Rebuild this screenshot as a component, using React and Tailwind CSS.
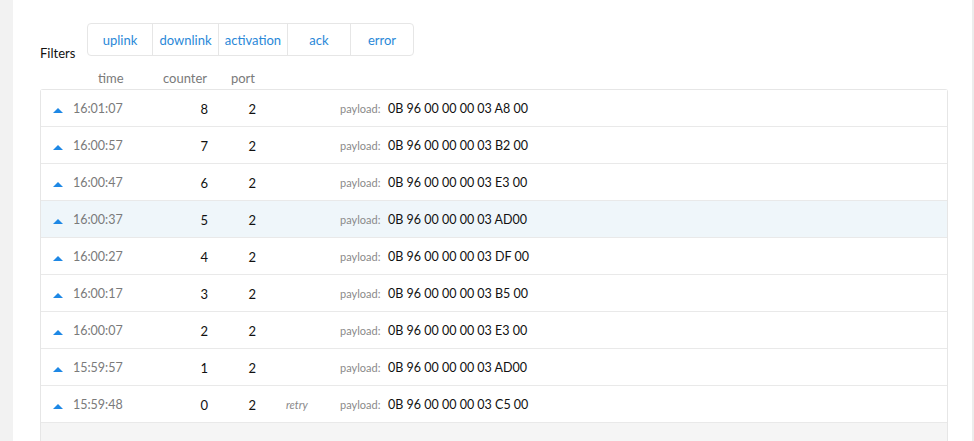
const filters = [
  { label: 'uplink', w: 'w-[64px]' },
  { label: 'downlink', w: 'w-[66px]' },
  { label: 'activation', w: 'w-[69px]' },
  { label: 'ack', w: 'w-[63px]' },
  { label: 'error', w: 'w-[63px]' },
];

const rows = [
  { time: '16:01:07', counter: 8, port: 2, payload: '0B 96 00 00 00 03 A8 00' },
  { time: '16:00:57', counter: 7, port: 2, payload: '0B 96 00 00 00 03 B2 00' },
  { time: '16:00:47', counter: 6, port: 2, payload: '0B 96 00 00 00 03 E3 00' },
  { time: '16:00:37', counter: 5, port: 2, payload: '0B 96 00 00 00 03 AD00', active: true },
  { time: '16:00:27', counter: 4, port: 2, payload: '0B 96 00 00 00 03 DF 00' },
  { time: '16:00:17', counter: 3, port: 2, payload: '0B 96 00 00 00 03 B5 00' },
  { time: '16:00:07', counter: 2, port: 2, payload: '0B 96 00 00 00 03 E3 00' },
  { time: '15:59:57', counter: 1, port: 2, payload: '0B 96 00 00 00 03 AD00' },
  { time: '15:59:48', counter: 0, port: 2, payload: '0B 96 00 00 00 03 C5 00', retry: true },
];

function UpTriangle() {
  return (
    <svg width="10" height="5" viewBox="0 0 10 5" className="mt-[2px]">
      <path d="M0 5 L5 0 L10 5 Z" fill="#1e88e5" />
    </svg>
  );
}

function Row({ row }) {
  return (
    <div
      className={
        'flex items-center h-[37px] pt-[3px] border-b border-[#e9e9e9] ' +
        (row.active ? 'bg-[#eff6fa]' : 'bg-white')
      }
    >
      <div className="w-[32px] pl-[12px] flex items-center">
        <UpTriangle />
      </div>
      <div className="w-[95px] text-[12.5px] text-[#7a7a7a]">{row.time}</div>
      <div className="w-[40px] text-right text-[13px] text-[#111]">{row.counter}</div>
      <div className="w-[48px] text-right text-[13px] text-[#111]">{row.port}</div>
      <div className="w-[84px] pl-[30px] text-[11px] italic text-[#888]">{row.retry ? 'retry' : ''}</div>
      <div className="w-[48px] text-[11px] text-[#8a8a8a]">payload:</div>
      <div className="text-[12.5px] text-[#111] whitespace-nowrap">{row.payload}</div>
    </div>
  );
}

export default function App() {
  return (
    <div
      className="flex h-[441px] w-[974px] overflow-hidden bg-white"
      style={{ fontFamily: 'Lato, "Open Sans", sans-serif' }}
    >
      <div className="w-[13px] shrink-0 bg-[#f2f2f2]" />
      <div className="flex-1 pl-[27px] pr-[24px] pt-[23px]">
        <div className="flex items-end">
          <div className="w-[47px] mb-[-4px] leading-none text-[13px] text-[#111]">Filters</div>
          <div className="flex h-[33px] rounded-[4px] border border-[#e6e6e6]">
            {filters.map((f, i) => (
              <div
                key={f.label}
                className={
                  f.w +
                  ' flex items-center justify-center pt-[2px] text-[13px] text-[#2a88d8] ' +
                  (i > 0 ? 'border-l border-[#e6e6e6]' : '')
                }
              >
                {f.label}
              </div>
            ))}
          </div>
        </div>
        <div className="flex h-[33px] items-end pb-[1px] text-[13px] text-[#7a7a7a]">
          <div className="w-[58px]" />
          <div className="w-[65px]">time</div>
          <div className="w-[44px] text-right whitespace-nowrap">counter</div>
          <div className="w-[48px] text-right">port</div>
        </div>
        <div className="rounded-t-[3px] border border-b-0 border-[#e6e6e6]">
          {rows.map((r) => (
            <Row key={r.time} row={r} />
          ))}
          <div className="h-[60px] bg-[#f5f5f5]" />
        </div>
      </div>
      <div className="w-[2px] shrink-0 bg-[#ececec]" />
    </div>
  );
}
